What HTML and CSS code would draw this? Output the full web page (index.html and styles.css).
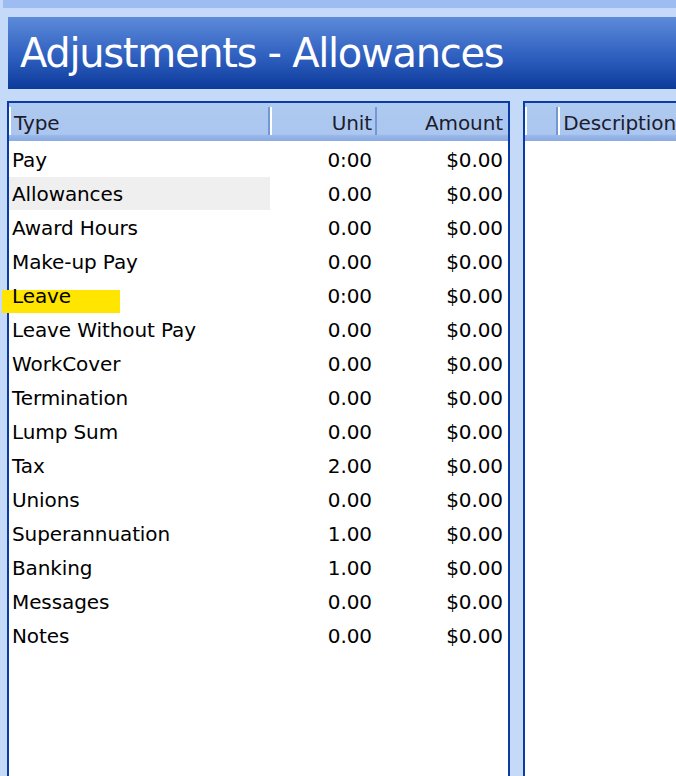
FILE: index.html
```html
<!DOCTYPE html>
<html lang="en">
<head>
  <meta charset="UTF-8">
  <title>Adjustments - Allowances</title>
  <link rel="stylesheet" href="styles.css">
</head>
<body>
  <div class="topbar"></div>

  <div class="title">Adjustments - Allowances</div>

  <div class="panels">
    <!-- adjustment types -->
    <div class="grid">
      <div class="row head">
        <div class="col type">Type</div>
        <div class="col unit">Unit</div>
        <div class="col amount">Amount</div>
      </div>
      <div class="row"><div class="col type">Pay</div><div class="col unit">0:00</div><div class="col amount">$0.00</div></div>
      <div class="row"><div class="col type selected">Allowances</div><div class="col unit">0.00</div><div class="col amount">$0.00</div></div>
      <div class="row"><div class="col type">Award Hours</div><div class="col unit">0.00</div><div class="col amount">$0.00</div></div>
      <div class="row"><div class="col type">Make-up Pay</div><div class="col unit">0.00</div><div class="col amount">$0.00</div></div>
      <div class="row"><div class="col type"><span class="marker"></span><span class="label">Leave</span></div><div class="col unit">0:00</div><div class="col amount">$0.00</div></div>
      <div class="row"><div class="col type">Leave Without Pay</div><div class="col unit">0.00</div><div class="col amount">$0.00</div></div>
      <div class="row"><div class="col type">WorkCover</div><div class="col unit">0.00</div><div class="col amount">$0.00</div></div>
      <div class="row"><div class="col type">Termination</div><div class="col unit">0.00</div><div class="col amount">$0.00</div></div>
      <div class="row"><div class="col type">Lump Sum</div><div class="col unit">0.00</div><div class="col amount">$0.00</div></div>
      <div class="row"><div class="col type">Tax</div><div class="col unit">2.00</div><div class="col amount">$0.00</div></div>
      <div class="row"><div class="col type">Unions</div><div class="col unit">0.00</div><div class="col amount">$0.00</div></div>
      <div class="row"><div class="col type">Superannuation</div><div class="col unit">1.00</div><div class="col amount">$0.00</div></div>
      <div class="row"><div class="col type">Banking</div><div class="col unit">1.00</div><div class="col amount">$0.00</div></div>
      <div class="row"><div class="col type">Messages</div><div class="col unit">0.00</div><div class="col amount">$0.00</div></div>
      <div class="row"><div class="col type">Notes</div><div class="col unit">0.00</div><div class="col amount">$0.00</div></div>
    </div>

    <!-- description -->
    <div class="grid desc">
      <div class="row head">
        <div class="col blank"></div>
        <div class="col description">Description</div>
      </div>
    </div>
  </div>
</body>
</html>
```

FILE: styles.css
```css
/* page */
* {
  box-sizing: border-box;
}

body {
  font-family: "DejaVu Sans", Verdana, sans-serif;
  background-color: #c5daf8;
  color: #000;
  margin: 0;
  padding: 0;
  height: 776px;
  overflow: hidden;
  display: flex;
  flex-direction: column;
}

.topbar {
  height: 8px;
  margin-left: 3px;
  background-color: #9dbcf1;
}

/* title bar */
.title {
  margin: 9px 0 0 8px;
  height: 72px;
  padding-left: 12px;
  display: flex;
  align-items: center;
  background: linear-gradient(#5c8bda, #2f5fbf 55%, #0b3a9a);
  color: #fff;
  font-size: 40px;
  letter-spacing: -1.3px;
}

/* panels */
.panels {
  flex: 1;
  display: flex;
  gap: 13px;
  margin-top: 12px;
  padding-left: 7px;
}

.grid {
  flex-shrink: 0;
  width: 503px;
  background-color: #fff;
  border: 2px solid #0b3ca6;
  border-bottom: none;
  font-size: 20px;
  letter-spacing: -0.1px;
}

.grid.desc {
  flex: 1;
  min-width: 0;
  overflow: hidden;
  border-right: none;
}

.row {
  display: flex;
  height: 34px;
  align-items: center;
  padding-top: 1px;
}

.col {
  height: 100%;
  display: flex;
  align-items: center;
  white-space: nowrap;
}

.type {
  position: relative;
  width: 261px;
  padding-left: 3px;
}
.unit {
  width: 107px;
  justify-content: flex-end;
  padding-right: 5px;
}
.amount {
  flex: 1;
  justify-content: flex-end;
  padding-right: 5px;
}

.selected {
  background-color: #efefef;
}

/* highlighter stroke over the Leave row */
.marker {
  position: absolute;
  left: -7px;
  top: 11px;
  width: 118px;
  height: 23px;
  background-color: #ffe500;
}
.label {
  position: relative;
}

/* header row */
.row.head {
  height: 38px;
  margin-bottom: 1px;
  padding-top: 0;
  align-items: flex-start;
  background: linear-gradient(#afcaf0, #abc6ef 82%, #98b6e8 86%, #8aaae2);
  color: #1c1c2c;
}
.head .col {
  border-left: 2px solid #fff;
  border-right: 2px solid #7497d6;
  height: 28px;
  margin-top: 4px;
  padding-top: 4px;
}
.head .unit {
  padding-right: 3px;
}
.head .amount {
  border-right: none;
  border-left: none;
}
.blank {
  width: 41px;
}
.grid .description {
  padding-left: 3px;
  border-right: none;
}
```
